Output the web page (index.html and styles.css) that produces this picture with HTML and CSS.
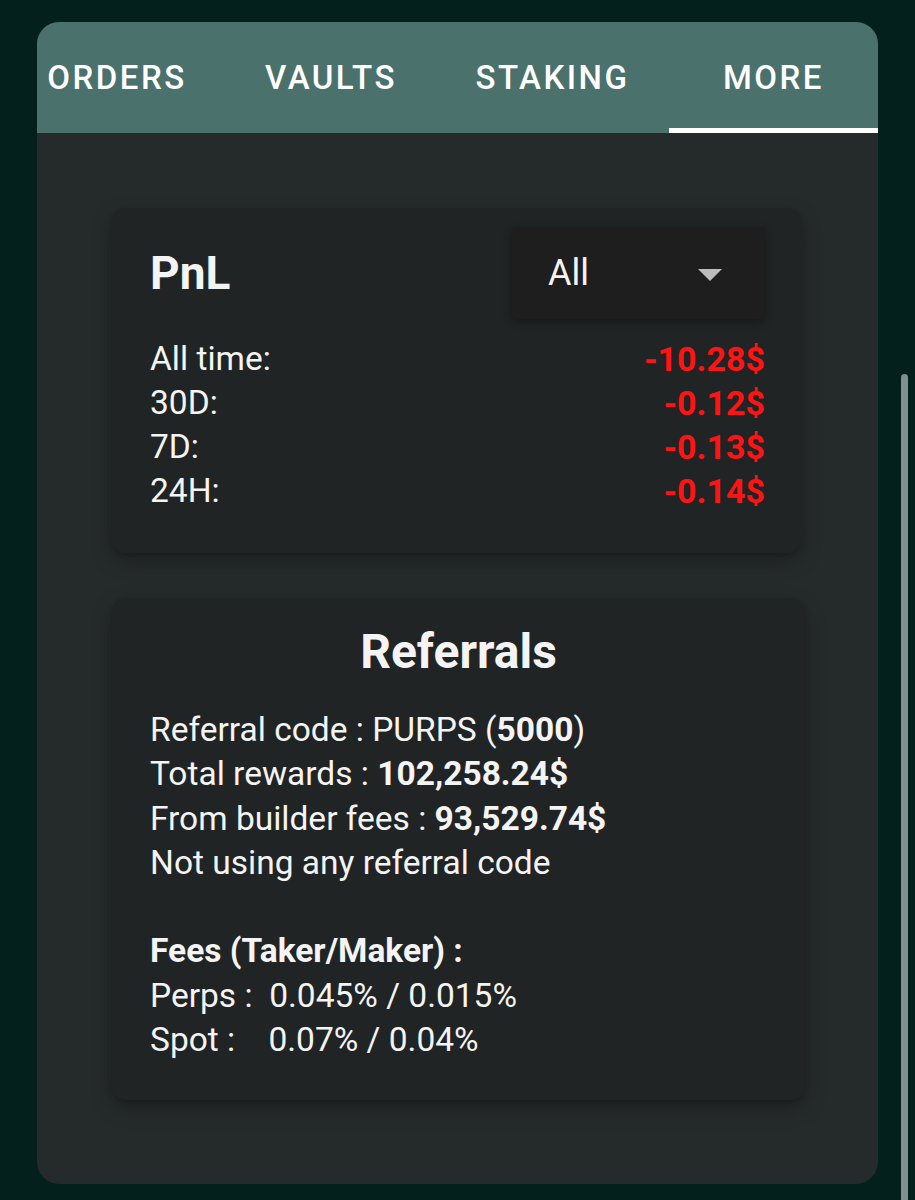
FILE: index.html
```html
<!DOCTYPE html>
<html>
<head>
<meta charset="utf-8">
<link rel="stylesheet" href="styles.css">
</head>
<body>
<div class="page">
  <div class="panel">
    <div class="tabs">
      <div class="tab tab-orders">ORDERS</div>
      <div class="tab tab-vaults">VAULTS</div>
      <div class="tab tab-staking">STAKING</div>
      <div class="tab tab-more active">MORE</div>
    </div>
    <div class="content">
      <div class="card pnl">
        <div class="pnl-head">
          <div class="card-title">PnL</div>
          <div class="select">
            <span class="select-value">All</span>
            <svg class="caret" width="24" height="12" viewBox="0 0 24 12"><path d="M0 0 L24 0 L12 12 Z" fill="#bdbdbd"/></svg>
          </div>
        </div>
        <div class="rows">
          <div class="row"><span>All time:</span><span class="neg">-10.28$</span></div>
          <div class="row"><span>30D:</span><span class="neg">-0.12$</span></div>
          <div class="row"><span>7D:</span><span class="neg">-0.13$</span></div>
          <div class="row"><span>24H:</span><span class="neg">-0.14$</span></div>
        </div>
      </div>
      <div class="card referrals">
        <div class="card-title centered big">Referrals</div>
        <div class="lines">
          <div class="line">Referral code : PURPS (<b>5000</b>)</div>
          <div class="line">Total rewards : <b>102,258.24$</b></div>
          <div class="line">From builder fees : <b>93,529.74$</b></div>
          <div class="line">Not using any referral code</div>
          <div class="line blank">&nbsp;</div>
          <div class="line"><b>Fees (Taker/Maker) :</b></div>
          <div class="line pre">Perps :  0.045% / 0.015%</div>
          <div class="line pre">Spot :    0.07% / 0.04%</div>
        </div>
      </div>
    </div>
  </div>
  <div class="scrollbar"></div>
</div>
</body>
</html>
```
FILE: styles.css
```css
html, body {
  margin: 0;
  padding: 0;
  background: #03201c;
  font-family: Roboto, "Liberation Sans", sans-serif;
  color: #f4f4f4;
}
.page {
  display: flex;
  align-items: flex-start;
  padding: 22px 0 0 37px;
  height: 1178px;
  overflow: hidden;
}
.panel {
  width: 841px;
  height: 1162px;
  border-radius: 22px;
  overflow: hidden;
  background: #252a2a;
  flex-shrink: 0;
}
.tabs {
  height: 111px;
  background: #4b716c;
  display: flex;
  justify-content: flex-end;
  overflow: hidden;
}
.tab {
  flex-shrink: 0;
  display: flex;
  align-items: center;
  justify-content: center;
  font-size: 33px;
  font-weight: 500;
  letter-spacing: 0.075em;
  color: #ffffff;
  box-sizing: border-box;
  height: 111px;
}
.tab-orders { width: 218px; }
.tab-vaults { width: 210px; }
.tab-staking { width: 233px; }
.tab-more { width: 209px; }
.tab.active {
  border-bottom: 5px solid #ffffff;
  padding-top: 5px;
}
.content {
  padding: 75px 77px 0 75px;
  display: flex;
  flex-direction: column;
  gap: 45px;
}
.card {
  background: #212425;
  border-radius: 14px;
  box-shadow: 0 8px 22px rgba(0, 0, 0, 0.22), 0 2px 5px rgba(0, 0, 0, 0.14);
}
.pnl {
  padding: 19px 36px 39px 38px;
  height: 345px;
  box-sizing: border-box;
}
.pnl-head {
  display: flex;
  justify-content: space-between;
  align-items: center;
  height: 92px;
  margin-bottom: 18px;
}
.card-title {
  font-size: 46px;
  font-weight: 700;
  line-height: 56px;
}
.card-title.big {
  font-size: 48px;
}
.centered { text-align: center; }
.select {
  width: 253px;
  height: 92px;
  background: #1f1e1e;
  border-radius: 4px;
  box-shadow: 0 3px 8px rgba(0, 0, 0, 0.35);
  display: flex;
  align-items: center;
  justify-content: space-between;
  padding: 0 43px 0 36px;
  box-sizing: border-box;
}
.select-value {
  font-size: 36px;
}
.caret {
  display: block;
  margin-top: 4px;
}
.rows {
  display: flex;
  flex-direction: column;
}
.row {
  display: flex;
  justify-content: space-between;
  font-size: 33.5px;
  line-height: 44px;
}
.neg {
  color: #ff1414;
  font-weight: 700;
  font-size: 34px;
}
.referrals {
  padding: 26px 38px 38px 38px;
  height: 502px;
  box-sizing: border-box;
  width: 693px;
}
.referrals .card-title {
  margin-bottom: 28px;
}
.line {
  font-size: 33.5px;
  line-height: 44.3px;
}
.line b { font-weight: 700; }
.pre { white-space: pre; }
.scrollbar {
  width: 7px;
  height: 900px;
  margin-top: 352px;
  margin-left: 23px;
  background: #7d918e;
  border-radius: 4px;
  flex-shrink: 0;
}
```
